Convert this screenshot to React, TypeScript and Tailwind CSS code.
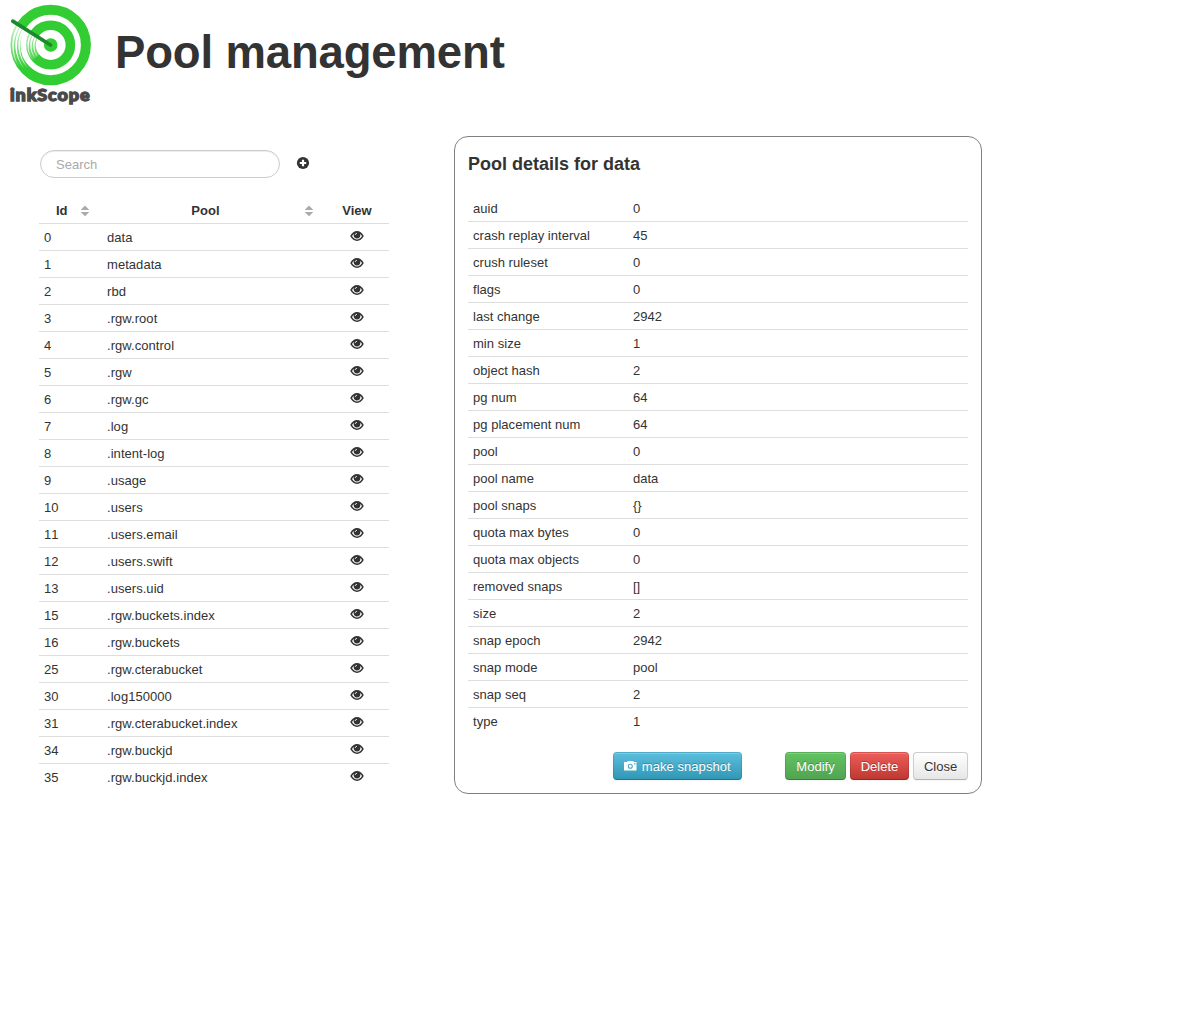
import React from "react";

const pools: [number, string][] = [
  [0, "data"],
  [1, "metadata"],
  [2, "rbd"],
  [3, ".rgw.root"],
  [4, ".rgw.control"],
  [5, ".rgw"],
  [6, ".rgw.gc"],
  [7, ".log"],
  [8, ".intent-log"],
  [9, ".usage"],
  [10, ".users"],
  [11, ".users.email"],
  [12, ".users.swift"],
  [13, ".users.uid"],
  [15, ".rgw.buckets.index"],
  [16, ".rgw.buckets"],
  [25, ".rgw.cterabucket"],
  [30, ".log150000"],
  [31, ".rgw.cterabucket.index"],
  [34, ".rgw.buckjd"],
  [35, ".rgw.buckjd.index"],
];

const details: [string, string][] = [
  ["auid", "0"],
  ["crash replay interval", "45"],
  ["crush ruleset", "0"],
  ["flags", "0"],
  ["last change", "2942"],
  ["min size", "1"],
  ["object hash", "2"],
  ["pg num", "64"],
  ["pg placement num", "64"],
  ["pool", "0"],
  ["pool name", "data"],
  ["pool snaps", "{}"],
  ["quota max bytes", "0"],
  ["quota max objects", "0"],
  ["removed snaps", "[]"],
  ["size", "2"],
  ["snap epoch", "2942"],
  ["snap mode", "pool"],
  ["snap seq", "2"],
  ["type", "1"],
];

const CX = 50.7;
const CY = 45;

// Point on a circle round the target's centre; degrees are measured from the left, downwards.
function at(r: number, deg: number) {
  const a = (deg * Math.PI) / 180;
  return `${(CX - r * Math.cos(a)).toFixed(2)} ${(CY + r * Math.sin(a)).toFixed(2)}`;
}

// Crescent that starts w wide at the needle and tapers to a point.
function streak(r: number, w: number, end: number) {
  return `M${at(r, -34)}A${r} ${r} 0 0 0 ${at(r, end)}A${r} ${r} 0 0 1 ${at(r - w, -34)}Z`;
}

function arc(r: number, end: number) {
  return `M${at(r, -34)}A${r} ${r} 0 0 0 ${at(r, end)}`;
}

function Logo() {
  return (
    <svg width="100" height="110" viewBox="0 0 100 110" className="block shrink-0">
      <defs>
        <linearGradient id="fade" gradientUnits="userSpaceOnUse" x1="0" y1="24" x2="0" y2="68">
          <stop offset="0" stopColor="#fff" stopOpacity=".75" />
          <stop offset=".5" stopColor="#fff" stopOpacity=".4" />
          <stop offset="1" stopColor="#fff" stopOpacity="0" />
        </linearGradient>
      </defs>
      <circle cx={CX} cy={CY} r="35.2" fill="none" stroke="#32cd32" strokeWidth="10" />
      <circle cx={CX} cy={CY} r="19.7" fill="none" stroke="#32cd32" strokeWidth="9.6" />
      <circle cx={CX} cy={CY} r="6.8" fill="#32cd32" />
      <path d={arc(35.2, 46)} fill="none" stroke="url(#fade)" strokeWidth="10.8" />
      <path d={arc(19.7, 40)} fill="none" stroke="url(#fade)" strokeWidth="10" />
      <g fill="#fff">
        <path d={streak(38.4, 2.4, 34)} />
        <path d={streak(35.4, 2.4, 42)} />
        <path d={streak(32.4, 2.4, 46)} />
        <path d={streak(23.2, 2, 34)} />
        <path d={streak(20.4, 2, 40)} />
        <path d={streak(17.6, 2, 44)} />
      </g>
      <path d="M12.8 21.2L50.5 45" stroke="#1c8a2c" strokeWidth="3.8" strokeLinecap="round" />
      <text
        x="10"
        y="101"
        textLength="80.5"
        lengthAdjust="spacingAndGlyphs"
        fill="#4a4a4a"
        stroke="#4a4a4a"
        strokeWidth="1.3"
        className="font-['Lato'] text-[16px] font-black tracking-[0.8px]"
      >
        inkScope
      </text>
    </svg>
  );
}

function Eye() {
  return (
    <svg width="14" height="12" viewBox="0 0 14 12" className="block">
      <path d="M.2 6Q3 1 7 1T13.8 6Q11 10.9 7 10.9T.2 6Z" fill="#333" />
      <path
        d="M2 6Q2.6 4.9 3.9 3.9Q3.3 5.5 4.1 7Q5.2 8.6 7 8.6T9.9 7Q10.7 5.5 10.1 3.9Q11.4 4.9 12 6Q10 9.4 7 9.4T2 6Z"
        fill="#fff"
      />
      <path d="M5.2 5Q5.3 3.4 7 3.3" stroke="#fff" strokeWidth=".8" fill="none" />
    </svg>
  );
}

function Sort() {
  return (
    <svg width="10" height="12" viewBox="0 0 10 12" className="block">
      <path d="M5 .5L9.3 5H.7ZM5 11.2L.7 7H9.3Z" fill="#aaa" />
    </svg>
  );
}

const btn =
  "flex h-7 items-center justify-center rounded-[4px] border pt-px text-[13px] leading-5";
const dark =
  "text-white [text-shadow:0_-1px_0_rgba(0,0,0,.25)] border-[rgba(0,0,0,.1)] border-b-[rgba(0,0,0,.25)] bg-origin-border shadow-[inset_0_1px_0_rgba(255,255,255,.2),0_1px_2px_rgba(0,0,0,.05)]";

export default function App() {
  return (
    <div className="h-[1029px] w-[1194px] overflow-hidden bg-white font-['Liberation_Sans',Arial,sans-serif] text-[13px] leading-[18px] text-[#333]">
      <header className="flex h-[110px]">
        <Logo />
        <h1 className="mt-[33px] ml-[15px] text-[45.5px] leading-[40px] font-bold tracking-[-0.15px]">Pool management</h1>
      </header>
      <main className="flex items-start pt-[26px] pl-[39px]">
        <section className="w-[350px] pt-[14px]">
          <div className="flex items-start pl-px">
            <input
              placeholder="Search"
              className="h-7 w-[240px] rounded-full border border-[#ccc] px-[15px] pt-px text-[13px] shadow-[inset_0_1px_1px_rgba(0,0,0,.075)] outline-none placeholder:text-[#aaa]"
            />
            <svg width="12" height="12" viewBox="0 0 12 12" className="mt-[7px] ml-[17px] overflow-visible">
              <circle cx="6" cy="6" r="6.1" fill="#333" />
              <path d="M6 2.8V9.2M2.8 6H9.2" stroke="#fff" strokeWidth="2.2" />
            </svg>
          </div>
          <div className="mt-[19px] grid h-[27px] grid-cols-[63px_223px_64px] border-b border-[#ddd] font-bold">
            <div className="flex items-center pt-px pl-[17px]">
              Id
              <span className="ml-[12px]"><Sort /></span>
            </div>
            <div className="flex items-center justify-end pt-px pr-[11px]">
              <span className="mr-[84.5px]">Pool</span>
              <Sort />
            </div>
            <div className="pt-[5px] text-center">View</div>
          </div>
          {pools.map(([id, name]) => (
            <div
              key={id}
              className="grid h-[27px] grid-cols-[63px_223px_64px] border-b border-[#ddd] pt-[5px] last:border-b-0"
            >
              <span className="pl-[5px] [font-kerning:none]">{id}</span>
              <span className="pl-[5px] tracking-[0.05px]">{name}</span>
              <span className="flex justify-center pt-px"><Eye /></span>
            </div>
          ))}
        </section>
        <section className="ml-[65px] h-[658px] w-[528px] rounded-[14px] border border-[#808080] px-[13px] pt-[17px]">
          <h2 className="text-[18px] leading-5 font-bold">Pool details for data</h2>
          <div className="mt-[21px]">
            {details.map(([key, value]) => (
              <div
                key={key}
                className="grid h-[27px] grid-cols-[160px_1fr] border-b border-[#ddd] pt-[5px] last:border-b-0"
              >
                <span className="pl-[5px] tracking-[0.03px]">{key}</span>
                <span className="pl-[5px]">{value}</span>
              </div>
            ))}
          </div>
          <div className="mt-[17px] flex justify-end gap-1">
            <button className={`${btn} ${dark} mr-[39px] w-[129px] bg-linear-to-b from-[#5bc0de] to-[#2f96b4] tracking-[0.05px]`}>
              <svg width="13" height="10" viewBox="0 0 13 10" className="mr-[4.5px] mb-[2px]">
                <path d="M0 1H3L4 0H9L10 1H12.5V9.5H0Z" fill="#fff" />
                <circle cx="6.3" cy="5.2" r="2" fill="none" stroke="#45abc9" strokeWidth="1.1" />
                <path d="M10 2.2H11.5V3.4H10Z" fill="#45abc9" />
              </svg>
              make snapshot
            </button>
            <button className={`${btn} ${dark} w-[61px] bg-linear-to-b from-[#62c462] to-[#51a351]`}>Modify</button>
            <button className={`${btn} ${dark} w-[59px] bg-linear-to-b from-[#ee5f5b] to-[#bd362f]`}>Delete</button>
            <button
              className={`${btn} w-[55px] border-[#ccc] border-b-[#b3b3b3] bg-linear-to-b from-white to-[#e6e6e6] text-[#333] shadow-[inset_0_1px_0_rgba(255,255,255,.2),0_1px_2px_rgba(0,0,0,.05)] [text-shadow:0_1px_1px_rgba(255,255,255,.75)]`}
            >
              Close
            </button>
          </div>
        </section>
      </main>
    </div>
  );
}
